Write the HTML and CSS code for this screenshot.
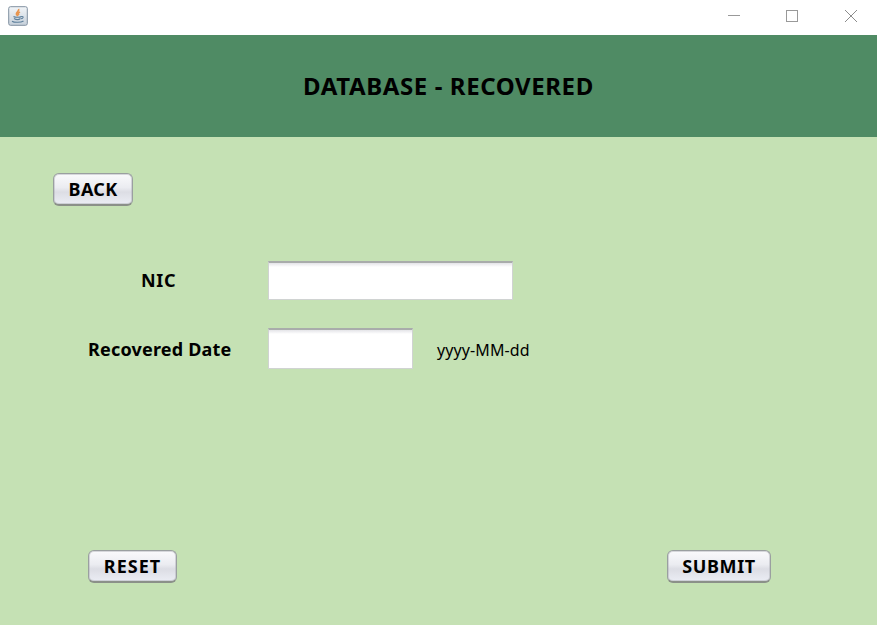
FILE: index.html
```html
<!DOCTYPE html>
<html lang="en">
<head>
<meta charset="utf-8">
<title>Database - Recovered</title>
<link rel="stylesheet" href="styles.css">
</head>
<body>
<div class="titlebar">
  <svg class="app-icon" width="20" height="20" viewBox="0 0 20 20" fill="none">
    <defs><linearGradient id="tile" x1="0" y1="0" x2="0" y2="1"><stop offset="0" stop-color="#f2f5f8"/><stop offset="1" stop-color="#c6d0da"/></linearGradient></defs>
    <rect x=".7" y=".7" width="18.6" height="18.6" rx="1.8" fill="url(#tile)" stroke="#8190a0"/>
    <path d="M10.5 3C12 5 7.5 6 8.500 8.500L10 10M12 6C9.500 7 10 8 11 9" stroke="#e8944e" stroke-width="1.7"/>
    <path d="M5.500 10.500C7 11.500 12 11.500 13.500 10.500M6 12.500C8 13.700 11 13.700 12.500 12.500M13.500 10.500C16 10 15.500 12.500 13 12.700M4 15.200C6 16.700 13 16.700 15.500 15" stroke="#5d7f9b" stroke-width="1.1"/>
  </svg>
  <div class="controls">
    <svg width="12" height="12" viewBox="0 0 12 12"><path d="M0 5.500H12" stroke="#999"/></svg>
    <svg width="12" height="12" viewBox="0 0 12 12"><rect x=".5" y=".5" width="11" height="11" fill="none" stroke="#999"/></svg>
    <svg width="12" height="12" viewBox="0 0 12 12"><path d="M0 0L12 12M12 0L0 12" stroke="#8c8c8c"/></svg>
  </div>
</div>
<header class="header"><h1>DATABASE - RECOVERED</h1></header>
<main class="content">
  <button class="btn back" type="button">BACK</button>
  <form class="form">
    <div class="row nic-row">
      <label class="nic" for="nic">NIC</label>
      <input id="nic" class="field wide" type="text">
    </div>
    <div class="row date-row">
      <label class="date" for="date">Recovered Date</label>
      <input id="date" class="field" type="text">
      <span class="hint">yyyy-MM-dd</span>
    </div>
  </form>
  <div class="actions">
    <button class="btn reset" type="button">RESET</button>
    <button class="btn submit" type="button">SUBMIT</button>
  </div>
</main>
</body>
</html>
```
FILE: styles.css
```css
* { box-sizing: border-box; }
body {
  margin: 0;
  width: 877px;
  height: 625px;
  overflow: hidden;
  display: flex;
  flex-direction: column;
  background: #c5e1b4;
  color: #000;
  font-family: "Noto Sans", sans-serif;
}
.titlebar {
  height: 35px;
  flex: none;
  display: flex;
  justify-content: space-between;
  padding: 6px 20px 0 8px;
  background: #fff;
}
.controls { display: flex; gap: 46px; padding-top: 4px; }
.controls svg:last-child { margin-left: 1px; }
.header {
  height: 102px;
  flex: none;
  padding: 34px 0 0 303px;
  background: #4f8b64;
}
h1 {
  margin: 0;
  font-size: 24px;
  line-height: 33px;
  font-weight: 700;
  letter-spacing: .6px;
  white-space: nowrap;
}
.content {
  flex: 1;
  display: flex;
  flex-direction: column;
  padding: 36px 106px 42px 53px;
}
.btn {
  height: 33px;
  padding: 0;
  border: 1px solid #9a9fa0;
  border-bottom: 2px solid #8b9089;
  border-radius: 6px;
  background: linear-gradient(#fafafc, #ebecf1 45%, #dcdde4 60%, #ebedf4);
  box-shadow: inset 0 0 0 1px rgba(170, 172, 180, .45);
  color: #000;
  font: 700 18px/30px "Noto Sans", sans-serif;
  white-space: nowrap;
}
.back { width: 80px; letter-spacing: .3px; }
.reset { width: 89px; letter-spacing: 1px; }
.submit { width: 104px; letter-spacing: .6px; }
.form { margin-top: 55px; }
.row { display: flex; align-items: center; }
.date-row { margin-top: 28px; }
label {
  flex: none;
  font-size: 18px;
  line-height: 25px;
  font-weight: 700;
  letter-spacing: .2px;
  white-space: nowrap;
}
.nic { width: 127px; margin-left: 88px; letter-spacing: .7px; }
.date { width: 180px; margin: 2px 0 0 35px; }
.field {
  width: 145px;
  height: 41px;
  border: 1px solid #d0d3d2;
  border-top: 2px solid #a9acab;
  background: linear-gradient(#e4e4e8, #fff 4px);
  outline: none;
}
.field.wide { width: 245px; height: 39px; }
.hint { margin: 3px 0 0 24px; font-size: 16px; line-height: 22px; letter-spacing: .1px; white-space: nowrap; }
.actions {
  margin: auto 0 0 35px;
  display: flex;
  justify-content: space-between;
}
```
